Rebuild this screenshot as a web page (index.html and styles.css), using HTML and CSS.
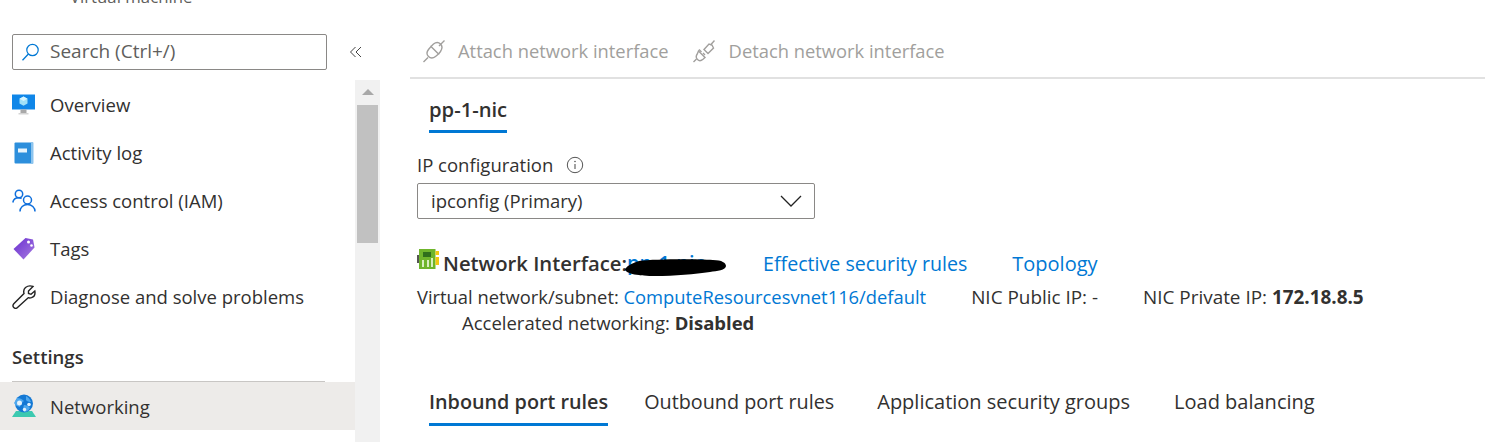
FILE: index.html
```html
<!DOCTYPE html>
<html lang="en">
<head>
<meta charset="utf-8">
<title>Networking</title>
<link rel="stylesheet" href="styles.css">
</head>
<body>
<div class="page">
  <aside class="sidebar">
    <div class="subtitle">Virtual machine</div>
    <div class="search-row">
      <div class="search">
        <svg class="search-icon" width="19" height="19" viewBox="0 0 19 19"><circle cx="11.5" cy="7" r="5.7" fill="none" stroke="#0078d4" stroke-width="1.2"/><path d="M7.4 11 1.5 17.3" stroke="#0078d4" stroke-width="1.3" fill="none"/></svg>
        <span>Search (Ctrl+/)</span>
      </div>
      <svg class="collapse" width="14" height="12" viewBox="0 0 14 12"><path d="M6.5 1 1.500 6l5 5M12 1 7 6l5 5" fill="none" stroke="#444" stroke-width="1"/></svg>
    </div>
    <div class="side-body">
      <nav class="nav">
        <a class="item">
          <svg class="ic" width="24" height="24" viewBox="0 0 24 24"><path d="M0 1.500h23v15H0z" fill="#0f86e8"/><path d="M8.500 16.500h6V20h-6z" fill="#a9a9a9"/><path d="M6.500 20h10v1.500h-10z" fill="#d4d4d4"/><path d="m11.500 3.500 4 2.300v4.700l-4 2.300-4-2.300V5.800z" fill="#9fe0f8"/><path d="m11.500 8 4-2.200-4-2.300-4 2.300z" fill="#d6f5ff"/></svg>
          <span>Overview</span>
        </a>
        <a class="item">
          <svg class="ic" width="24" height="24" viewBox="0 0 24 24"><path d="M3.500 1.500H21v21H3.500a1 1 0 0 1-1-1v-19a1 1 0 0 1 1-1z" fill="#2d8fdc"/><path d="M19 1.500h2.500v21H19z" fill="#8cc4ee"/><path d="M6 7.500h9v4H6z" fill="#e8f4fc"/></svg>
          <span>Activity log</span>
        </a>
        <a class="item">
          <svg class="ic" width="24" height="24" viewBox="0 0 24 24"><g fill="none" stroke="#0f6fdc" stroke-width="1.500"><circle cx="7" cy="5" r="3.700"/><path d="M.8 13.500c.5-2.700 3-4.700 6-4.700 1 0 2 .2 2.800.7"/><circle cx="15.500" cy="11" r="4"/><path d="M8 22.500c0-4 3.300-7 7.500-7s7.500 3 7.500 7"/></g></svg>
          <span>Access control (IAM)</span>
        </a>
        <a class="item">
          <svg class="ic" width="24" height="24" viewBox="0 0 24 24"><defs><linearGradient id="tag" x1="0" y1="0" x2="1" y2="1"><stop offset="0" stop-color="#6a2fd0"/><stop offset="1" stop-color="#a67be0"/></linearGradient></defs><path d="M1.500 12 13.500 1l7.500 1.500 1.500 8L11.500 22.500z" fill="url(#tag)"/><circle cx="16.500" cy="5" r="1.500" fill="#fff"/><circle cx="19.500" cy="8.500" r="1.300" fill="#fff"/></svg>
          <span>Tags</span>
        </a>
        <a class="item">
          <svg class="ic" width="24" height="24" viewBox="0 0 24 24"><path d="M21 1.500 16.500 6v2.500l2.500 .8 3.800-3.300c.6 3-.8 5.800-3.300 6.700-1.200.4-2.300.4-3.300 0L5.500 22.500c-1.200 1.200-2.800 1-3.700 0-1-1-1-2.500 0-3.700L12 8.500c-.7-2.500-.2-4.500 1.500-6 2-1.500 5-2 7.500-1z" fill="none" stroke="#222" stroke-width="1.400"/></svg>
          <span>Diagnose and solve problems</span>
        </a>
        <div class="section">Settings</div>
        <a class="item active">
          <svg class="ic" width="24" height="24" viewBox="0 0 24 24"><path d="M4 17h16l4 6H0z" fill="#3cc9b0"/><circle cx="12" cy="9.500" r="9" fill="#1478d4"/><path d="M5 4c3 0 5 1 7 3-2 2-4 3-4 6-3-1-5-2-6-4zM14 2c2 1 4 3 5 6-2 0-4-.5-5-2zM12 11c2 0 5 1 6 3-2 3-4 4-6 4-1-2-1-5 0-7z" fill="#4fa8ee"/><circle cx="7.500" cy="9" r="2.500" fill="#e4f2fc"/><circle cx="17" cy="10.500" r="1.800" fill="#e4f2fc"/><circle cx="12.500" cy="15.500" r="1.700" fill="#e4f2fc"/></svg>
          <span>Networking</span>
        </a>
      </nav>
      <div class="scrollbar">
        <div class="arrow"></div>
        <div class="thumb"></div>
      </div>
    </div>
  </aside>
  <main class="main">
    <div class="toolbar">
      <button class="tool">
        <svg width="22" height="24" viewBox="0 0 22 24"><g fill="none" stroke="#a19f9d" stroke-width="1.400"><path d="M.5 23l4.500-4.500M16 7l5.500-5.500"/><path d="M8 7.500 15.500 15l-3 2.500c-2.500 2-5 2-7 0s-2-4.500 0-7z"/><path d="M8 7.500 10.500 5c2.500-2 5-2 7 0s2 4.500 0 7.500L15.500 15"/></g></svg>
        <span>Attach network interface</span>
      </button>
      <button class="tool tool-b">
        <svg width="22" height="24" viewBox="0 0 22 24"><g fill="none" stroke="#a19f9d" stroke-width="1.400"><path d="M.5 23l3-3M17.500 6l4-4.500M8.500 13 6 10.500M12 16l-2-2"/><path d="M5.500 12 12 18.500l-2 1.800c-2 1.700-4 1.700-5.500.2s-1.500-4 0-6z"/><path d="M11 10.500 16 5l3 1 1.500 3-5.500 5.500z"/></g></svg>
        <span>Detach network interface</span>
      </button>
    </div>
    <div class="nic-tabs"><span class="tab on">pp-1-nic</span></div>
    <div class="label-row">
      <span>IP configuration</span>
      <svg width="18" height="18" viewBox="0 0 18 18"><circle cx="9" cy="9" r="7.700" fill="none" stroke="#555" stroke-width="1"/><path d="M9 8v5" stroke="#555" stroke-width="1.100"/><circle cx="9" cy="5.500" r=".8" fill="#555"/></svg>
    </div>
    <div class="select">
      <span>ipconfig (Primary)</span>
      <svg width="22" height="12" viewBox="0 0 22 12"><path d="M1 1l10 10L21 1" fill="none" stroke="#222" stroke-width="1.300"/></svg>
    </div>
    <div class="nic-head">
      <svg class="nic-icon" width="22" height="21" viewBox="0 0 22 21"><path d="M0 6h2v8H0z" fill="#555"/><path d="M2 0h16.500v20H2z" fill="#6fb52c"/><path d="M18.500 2H22v4h-3.500zM18.500 8H22v8h-3.500z" fill="#f2c811"/><path d="M6 3h8v5H6z" fill="#2f6f1c"/><path d="M5 11h2v7H5zM10 11h2v7h-2zM14 9h2v9h-2z" fill="#d8efc0"/></svg>
      <strong class="nic-title">Network Interface:</strong>
      <span class="nic-name"><a class="link bold">pp-1-nic</a><svg class="blot" width="102" height="18" viewBox="0 0 102 18"><path d="M0 11C3 7 8 5 14 3 30 1 70 1 88 2c9 0 13 3 13 6 0 4-9 5-16 6-15 2-35 4-55 4-15 0-30-2-30-7z" fill="#000"/></svg></span>
      <a class="link rules">Effective security rules</a>
      <a class="link topo">Topology</a>
    </div>
    <div class="facts">
      <span class="fact-sub">Virtual network/subnet: <a class="link">ComputeResourcesvnet116/default</a></span>
      <span>NIC Public IP: -</span>
      <span>NIC Private IP: <b>172.18.8.5</b></span>
    </div>
    <div class="accel">Accelerated networking: <b>Disabled</b></div>
    <div class="rule-tabs">
      <span class="tab on">Inbound port rules</span>
      <span class="tab">Outbound port rules</span>
      <span class="tab app">Application security groups</span>
      <span class="tab lb">Load balancing</span>
    </div>
  </main>
</div>
</body>
</html>
```

FILE: styles.css
```css
html, body { margin: 0; padding: 0; background: #fff; overflow: hidden; }
body { font-family: "Open Sans", "Noto Sans", "Liberation Sans", sans-serif; font-size: 18.5px; color: #323130; }
a { color: inherit; text-decoration: none; }
.page { display: flex; height: 442px; overflow: hidden; }

.sidebar { width: 380px; flex: none; display: flex; flex-direction: column; }
.subtitle { height: 34px; margin-top: -15px; padding-left: 70px; line-height: 24px; font-size: 16.8px; color: #605e5c; }
.search-row { display: flex; align-items: center; height: 36px; padding-left: 12px; margin-top: 15px; }
.search { width: 315px; height: 36px; box-sizing: border-box; border: 1px solid #8a8886; border-radius: 2px; display: flex; align-items: center; gap: 10px; padding: 0 0 2px 8px; color: #605e5c; font-size: 19px; }
.search-icon { flex: none; margin-top: 2px; }
.collapse { margin-left: 22px; }
.side-body { display: flex; flex: 1; margin-top: 10px; min-height: 0; }
.nav { width: 355px; flex: none; padding-top: 1px; display: flex; flex-direction: column; }
.item { height: 48px; display: flex; align-items: center; padding-left: 12px; gap: 14px; flex: none; }
.item span { padding-bottom: 2px; }
.item.active span { padding-bottom: 0; }
.ic { flex: none; }
.section { height: 49px; margin: 12px 0 0 12px; width: 313px; box-sizing: border-box; padding-top: 12px; font-weight: 600; line-height: 24px; border-bottom: 1px solid #c8c6c4; flex: none; }
.item.active { background: #edebe9; }
.scrollbar { width: 25px; flex: none; background: #f1f1f1; display: flex; flex-direction: column; align-items: center; }
.arrow { margin-top: 9px; width: 0; height: 0; border-left: 6px solid transparent; border-right: 6px solid transparent; border-bottom: 6px solid #a8a8a8; }
.thumb { margin-top: 10px; width: 21px; height: 138px; background: #c1c1c1; }

.main { flex: 1; margin-left: 30px; min-width: 0; }
.toolbar { height: 77px; border-bottom: 2px solid #e1e1e1; display: flex; align-items: center; gap: 24px; padding-left: 13px; }
.tool { border: 0; background: none; padding: 0; font: inherit; font-size: 18.35px; color: #a19f9d; display: flex; align-items: center; gap: 13px; margin-top: 24px; }
.tool-b { gap: 14px; }
.nic-tabs { display: flex; padding-left: 19px; height: 54px; }
.tab { display: inline-block; font-size: 19.8px; }
.nic-tabs .tab { height: 51px; line-height: 60px; border-bottom: 3px solid #0078d4; font-weight: 600; font-size: 20.2px; }
.label-row { display: flex; align-items: center; gap: 13px; padding-left: 7px; height: 24px; margin-top: 20px; }
.label-row span { padding-bottom: 2px; }
.select { margin: 6px 0 0 7px; width: 398px; height: 36px; box-sizing: border-box; border: 1px solid #8a8886; border-radius: 2px; display: flex; align-items: center; justify-content: space-between; padding: 0 12px 0 13px; }
.select span { padding-bottom: 2px; }
.nic-head { display: flex; align-items: center; margin: 29px 0 0 7px; height: 30px; }
.nic-icon { margin: -8px 4px 0 0; }
.nic-title { font-weight: 600; font-size: 20.3px; }
.nic-name { position: relative; width: 136px; font-size: 20px; line-height: 26px; }
.link { color: #0078d4; }
.rules { font-size: 19.6px; }
.topo { font-size: 20px; margin-left: 45px; }
.bold { font-weight: 600; }
.blot { position: absolute; left: -2px; top: 8px; }
.facts { display: flex; gap: 45px; padding-left: 7px; margin-top: 6px; height: 26px; line-height: 26px; font-size: 18.9px; }
.fact-sub { font-size: 18.35px; }
.facts b, .accel b { font-weight: 700; }
.accel { padding-left: 52px; height: 26px; line-height: 26px; }
.rule-tabs { display: flex; gap: 36px; padding-left: 19px; margin-top: 45px; }
.rule-tabs .tab { height: 45px; line-height: 42px; box-sizing: border-box; }
.rule-tabs .tab.app { margin-left: 7px; font-size: 20px; }
.rule-tabs .tab.lb { margin-left: 8px; font-size: 20px; }
.rule-tabs .tab.on { font-weight: 600; border-bottom: 3px solid #0078d4; }
```
